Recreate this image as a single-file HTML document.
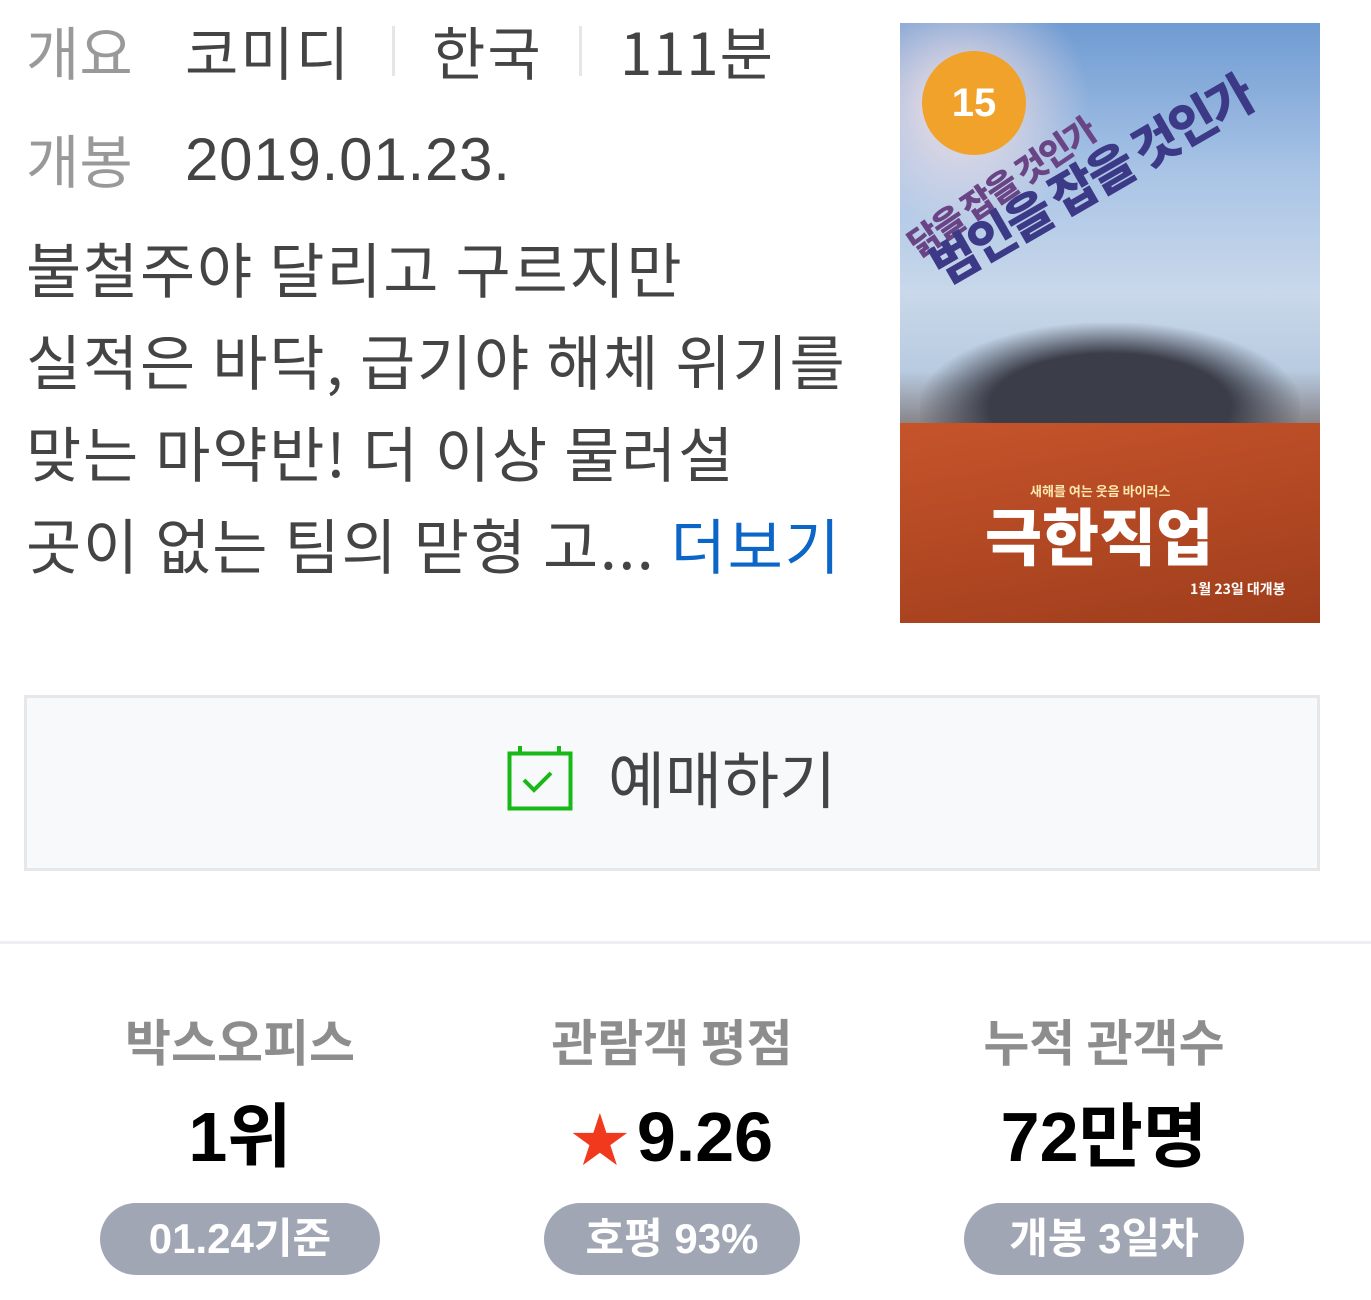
<!DOCTYPE html>
<html><head><meta charset="utf-8"><style>
*{margin:0;padding:0;box-sizing:border-box}
body{width:1371px;height:1300px;background:#fff;position:relative;overflow:hidden;font-family:"Liberation Sans","Noto Sans CJK KR",sans-serif;color:#444}
.a{position:absolute;white-space:nowrap}
.k{font-family:"Noto Sans CJK KR",sans-serif}
.lbl{color:#999}
.sep{position:absolute;width:3px;height:50px;background:#e6e6e6}
.syn{position:absolute;left:26px;top:222px;font-family:"Noto Sans CJK KR",sans-serif;font-size:60px;line-height:92px;color:#444;letter-spacing:1.8px;white-space:nowrap}
.col{position:absolute;top:1005px;width:432px;text-align:center;font-family:"Noto Sans CJK KR",sans-serif}
.col .h{font-size:50px;font-weight:700;color:#8d8d8d;line-height:70px;height:70px}
.col .v{font-size:70px;font-weight:700;color:#000;line-height:100px;height:100px;margin-top:12px;font-family:"Liberation Sans","Noto Sans CJK KR",sans-serif}
.col .b{display:inline-block;margin-top:16px;height:72px;border-radius:36px;background:#a1a6b4;color:#fff;font-size:42px;font-weight:700;line-height:72px;font-family:"Liberation Sans","Noto Sans CJK KR",sans-serif}
.pt{position:absolute;font-family:"Noto Sans CJK KR",sans-serif;font-weight:900;transform-origin:left bottom;white-space:nowrap}
</style></head><body>
<div class="a k lbl" style="left:26px;top:10px;font-size:58px;line-height:80px">개요</div>
<div class="a k" style="left:185px;top:10px;font-size:58px;line-height:80px;letter-spacing:2px">코미디</div>
<div class="sep" style="left:392px;top:26px"></div>
<div class="a k" style="left:432px;top:10px;font-size:58px;line-height:80px;letter-spacing:2px">한국</div>
<div class="sep" style="left:579px;top:26px"></div>
<div class="a k" style="left:620px;top:10px;font-size:58px;line-height:80px;letter-spacing:1px">111분</div>
<div class="a k lbl" style="left:26px;top:118px;font-size:58px;line-height:80px">개봉</div>
<div class="a" style="left:185px;top:120px;font-size:60px;line-height:80px;letter-spacing:0.8px">2019.01.23.</div>
<div class="syn">불철주야 달리고 구르지만<br>실적은 바닥, 급기야 해체 위기를<br>맞는 마약반! 더 이상 물러설<br>곳이 없는 팀의 맏형 고... <span style="color:#0b66c8">더보기</span></div>

<div class="a" style="left:900px;top:23px;width:420px;height:600px;overflow:hidden;background:linear-gradient(180deg,#6f9bd2 0%,#a9c4e6 25%,#c9d8ea 45%,#b8cbe0 58%,#8b8a90 66%,#b5502c 72%,#a8431f 85%,#7a3018 100%)">
 <div style="position:absolute;left:0;top:0;width:200px;height:200px;background:radial-gradient(circle at 30% 40%,rgba(255,230,230,.9),rgba(255,255,255,0) 70%)"></div>
 <div style="position:absolute;left:22px;top:28px;width:104px;height:104px;border-radius:50%;background:#f0a22a;color:#fff;font:700 40px/104px 'Liberation Sans',sans-serif;text-align:center">15</div>
 <div class="pt" style="left:22px;top:200px;height:40px;font-size:34px;line-height:40px;color:#6a4585;letter-spacing:-2px;transform:rotate(-34deg)">닭을 잡을 것인가</div>
 <div class="pt" style="left:48px;top:212px;height:58px;font-size:50px;line-height:58px;color:#3c3a86;letter-spacing:-3px;transform:rotate(-30deg)">범인을 잡을 것인가</div>
 <div style="position:absolute;left:20px;top:300px;width:380px;height:140px;background:radial-gradient(ellipse at 50% 60%,#3b3d48 0%,#3b3d48 45%,rgba(60,60,70,0) 72%)"></div>
 <div style="position:absolute;left:0;top:400px;width:420px;height:200px;background:linear-gradient(170deg,#c6542b,#9f3d1c)"></div>
 <div class="k" style="position:absolute;left:130px;top:458px;font-size:13px;font-weight:700;color:#fde9b0">새해를 여는 웃음 바이러스</div>
 <div class="k" style="position:absolute;left:85px;top:470px;font-size:62px;font-weight:900;color:#fff;line-height:80px">극한직업</div>
 <div class="k" style="position:absolute;left:290px;top:556px;font-size:14px;font-weight:700;color:#fff">1월 23일 대개봉</div>
</div>

<div class="a" style="left:24px;top:695px;width:1296px;height:176px;background:#f8f9fb;border:3px solid #e5e7ea"></div>
<svg class="a" style="left:506px;top:746px" width="68" height="66" viewBox="0 0 68 66"><rect x="3.5" y="7.5" width="61" height="55" fill="none" stroke="#18b817" stroke-width="4"/><path d="M14 0v8M53 0v8" stroke="#18b817" stroke-width="4"/><path d="M18 34l10 10 17-17" fill="none" stroke="#18b817" stroke-width="4"/></svg>
<div class="a k" style="left:608px;top:736px;font-size:62px;line-height:80px;color:#444">예매하기</div>

<div class="a" style="left:0;top:941px;width:1371px;height:3px;background:#eceef1"></div>

<div class="col" style="left:24px"><div class="h">박스오피스</div><div class="v">1위</div><div class="b" style="width:280px">01.24기준</div></div>
<div class="col" style="left:456px"><div class="h">관람객 평점</div><div class="v"><span style="color:#f0391d;font-size:58px;margin-right:8px">★</span>9.26</div><div class="b" style="width:256px">호평 93%</div></div>
<div class="col" style="left:888px"><div class="h">누적 관객수</div><div class="v">72만명</div><div class="b" style="width:280px">개봉 3일차</div></div>
</body></html>
